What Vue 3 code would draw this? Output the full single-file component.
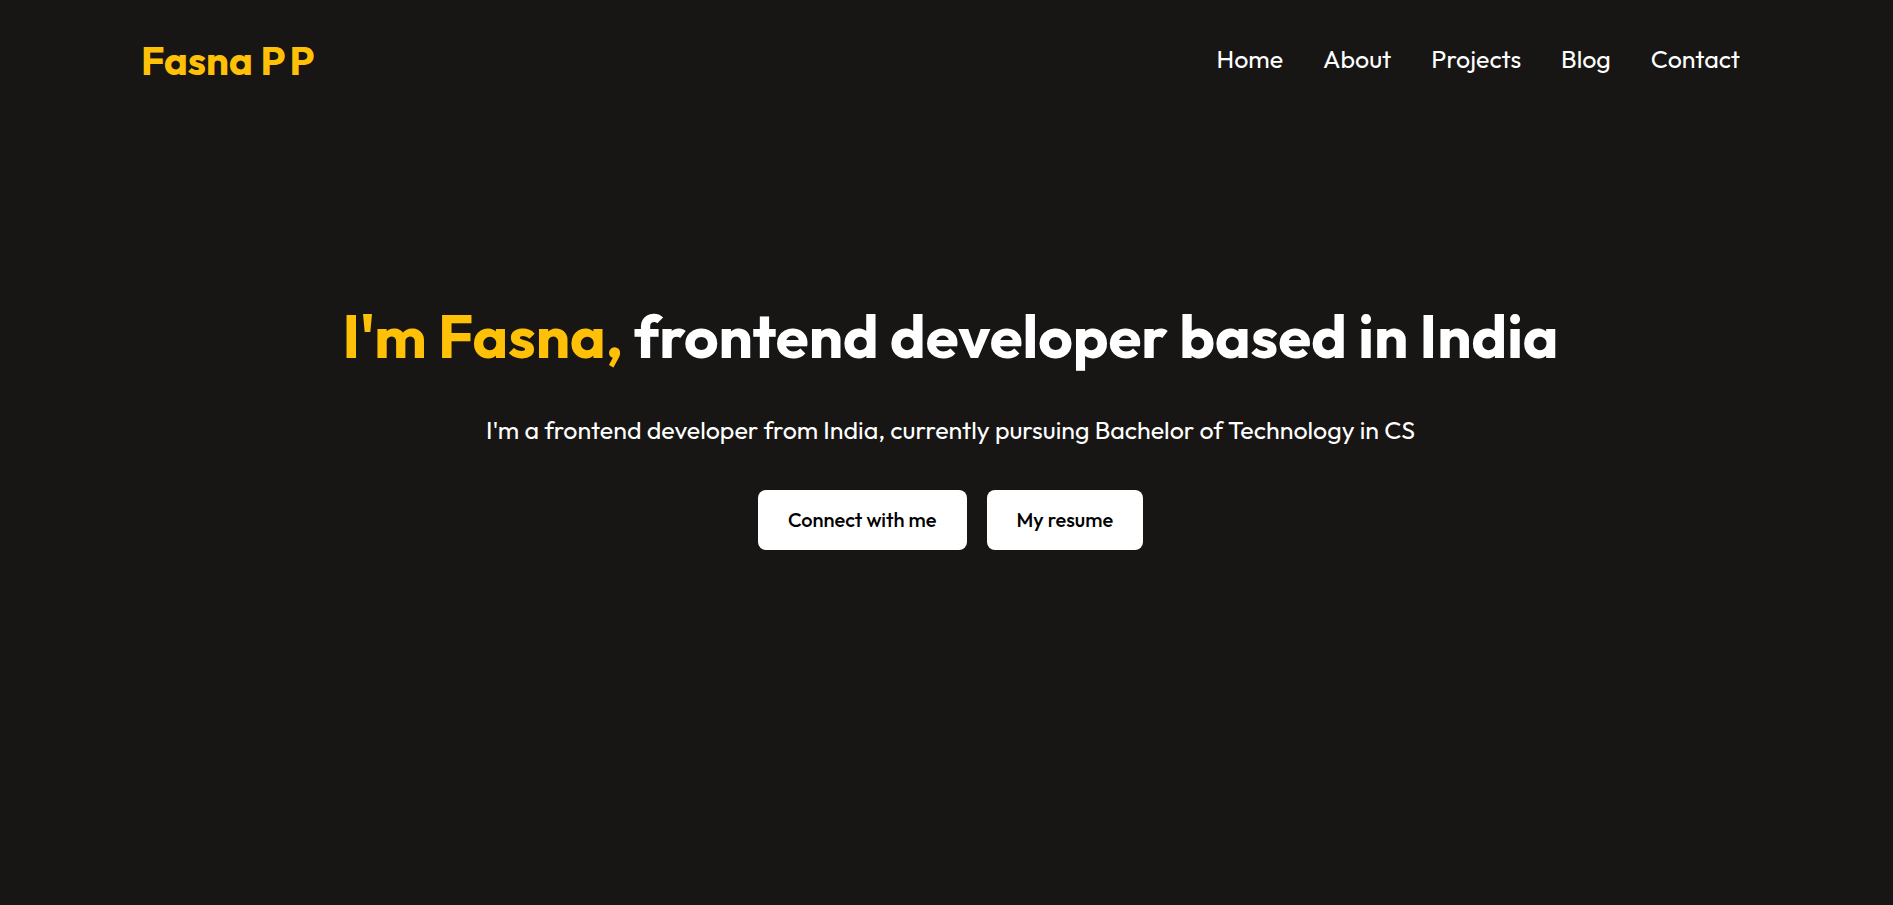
<script setup>
const links = ['Home', 'About', 'Projects', 'Blog', 'Contact']
</script>

<template>
  <div class="page">
    <header class="navbar">
      <a class="logo" href="#home"><span>Fasna P</span> <span>P</span></a>
      <nav aria-label="Main">
        <ul class="menu">
          <li v-for="link in links" :key="link">
            <a :href="'#' + link.toLowerCase()">{{ link }}</a>
          </li>
        </ul>
      </nav>
    </header>
    <main id="home" class="hero">
      <h1><span>I'm Fasna,</span> frontend developer based in India</h1>
      <p>I'm a frontend developer from India, currently pursuing Bachelor of Technology in CS</p>
      <div class="actions">
        <button type="button">Connect with me</button>
        <button type="button">My resume</button>
      </div>
    </main>
  </div>
</template>

<style>
body {
  margin: 0;
  background: #171614;
}
</style>

<style scoped>
.page {
  min-height: 100vh;
  color: #fff;
  font-family: Outfit, Lato, sans-serif;
}
.navbar {
  display: flex;
  align-items: center;
  justify-content: space-between;
  padding: 36px 153px 0 141px;
}
.logo {
  display: flex;
  gap: 4px;
  color: #ffc107;
  font-size: 40px;
  line-height: 48px;
  font-weight: 700;
  text-decoration: none;
}
.menu {
  display: flex;
  gap: 40px;
  margin: 0;
  padding: 0 0 2px;
  list-style: none;
}
.menu a {
  color: inherit;
  font-size: 25px;
  line-height: 46px;
  text-decoration: none;
}
.hero {
  display: flex;
  flex-direction: column;
  align-items: center;
  padding: 212px 24px 0;
  margin-left: 8px;
  text-align: center;
}
h1 {
  margin: 0;
  font-size: 60px;
  line-height: 80px;
  font-weight: 700;
}
h1 span {
  color: #ffc107;
}
p {
  margin: 38px 0 44px;
  font-size: 25px;
  line-height: 32px;
}
.actions {
  display: flex;
  flex-wrap: wrap;
  justify-content: center;
  gap: 20px;
}
button {
  padding: 0 30px;
  border: 0;
  border-radius: 8px;
  background: #fff;
  color: #000;
  font-family: inherit;
  font-size: 20px;
  line-height: 60px;
  font-weight: 500;
}
</style>
